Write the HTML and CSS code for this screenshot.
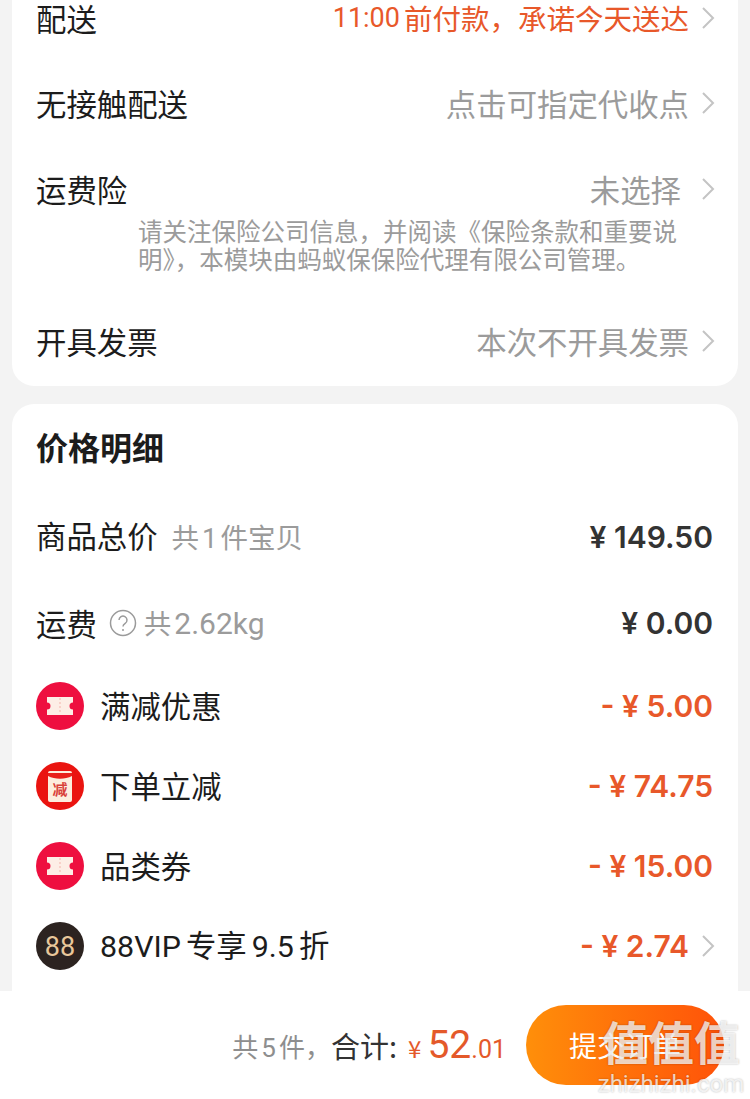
FILE: index.html
```html
<!DOCTYPE html>
<html lang="zh-CN">
<head>
    <meta charset="UTF-8">
    <title>确认订单</title>
    <link rel="stylesheet" href="styles.css">
</head>
<body>
    <main class="content">
        <section class="card card-top">
            <div class="row row-first">
                <span>配送</span>
                <span class="value orange value-time"><span class="num time">11:00</span>前付款，承诺今天送达<svg class="arrow" viewBox="0 0 14 24"><path d="M2 2l10 10L2 22"/></svg></span>
            </div>
            <div class="row">
                <span>无接触配送</span>
                <span class="value">点击可指定代收点<svg class="arrow" viewBox="0 0 14 24"><path d="M2 2l10 10L2 22"/></svg></span>
            </div>
            <div class="insure">
                <div class="insure-head">
                    <span>运费险</span>
                    <span class="value value-short">未选择<svg class="arrow" viewBox="0 0 14 24"><path d="M2 2l10 10L2 22"/></svg></span>
                </div>
                <p class="note">请关注保险公司信息，并阅读《保险条款和重要说明》，本模块由蚂蚁保保险代理有限公司管理。</p>
            </div>
            <div class="row">
                <span>开具发票</span>
                <span class="value">本次不开具发票<svg class="arrow" viewBox="0 0 14 24"><path d="M2 2l10 10L2 22"/></svg></span>
            </div>
        </section>

        <section class="card card-price">
            <h2 class="title">价格明细</h2>
            <div class="row">
                <span>商品总价<span class="sub sub-goods">共<span class="num gap">1</span>件宝贝</span></span>
                <span class="price">¥ 149.50</span>
            </div>
            <div class="row row-fee">
                <span class="fee">运费
                    <svg class="help" viewBox="0 0 28 28"><circle cx="14" cy="14" r="12.5"/><path d="M10 11a4 4 0 1 1 6.2 3.4c-1.4.9-2.2 1.6-2.2 3.1"/><circle class="dot" cx="14" cy="21" r="1"/></svg>
                    <span class="sub">共<span class="num gap weight">2.62kg</span></span>
                </span>
                <span class="price">¥ 0.00</span>
            </div>
            <div class="row row-promo">
                <span class="promo">
                    <svg class="badge" viewBox="0 0 48 48"><circle cx="24" cy="24" r="24" fill="#ee0f3f"/><path fill="#fdeee6" d="M11 15h26v5.500a3.500 3.500 0 0 0 0 7V33H11v-5.500a3.500 3.500 0 0 0 0-7z"/><path stroke="#f6c7c0" stroke-width="1.500" stroke-dasharray="2 2" d="M24 16v16"/></svg>
                    满减优惠
                </span>
                <span class="price orange">- ¥ 5.00</span>
            </div>
            <div class="row row-promo">
                <span class="promo">
                    <svg class="badge" viewBox="0 0 48 48"><circle cx="24" cy="24" r="24" fill="#ea1410"/><rect x="12" y="9" width="24" height="31" rx="2" fill="#fdeede"/><path d="M12 11h24v3c-7 3.500-17 3.500-24 0z" fill="#e9201a"/><text x="24" y="33" class="badge-text">减</text></svg>
                    下单立减
                </span>
                <span class="price orange">- ¥ 74.75</span>
            </div>
            <div class="row row-promo">
                <span class="promo">
                    <svg class="badge" viewBox="0 0 48 48"><circle cx="24" cy="24" r="24" fill="#ee0f3f"/><path fill="#fdeee6" d="M11 15h26v5.500a3.500 3.500 0 0 0 0 7V33H11v-5.500a3.500 3.500 0 0 0 0-7z"/><path stroke="#f6c7c0" stroke-width="1.500" stroke-dasharray="2 2" d="M24 16v16"/></svg>
                    品类券
                </span>
                <span class="price orange">- ¥ 15.00</span>
            </div>
            <div class="row row-promo">
                <span class="promo">
                    <svg class="badge" viewBox="0 0 48 48"><circle cx="24" cy="24" r="24" fill="#2c2320"/><text x="24" y="34" class="badge-vip">88</text></svg>
                    <span><span class="num">88VIP</span><span class="gap-l">专享</span><span class="num gap-w">9.5</span>折</span>
                </span>
                <span class="price orange">- ¥ 2.74<svg class="arrow" viewBox="0 0 14 24"><path d="M2 2l10 10L2 22"/></svg></span>
            </div>
        </section>
    </main>

    <footer class="bar">
        <span class="count">共<span class="num gap">5</span>件，</span>
        <span class="total-label">合计:</span>
        <span class="total"><span class="yen">¥</span> <span class="big">52</span><span class="cents">.01</span></span>
        <button class="submit" type="button">提交订单</button>
    </footer>

    <div class="watermark">
        <div class="wm-main">值值值</div>
        <div class="wm-url">zhizhizhi.com</div>
    </div>
</body>
</html>
```

FILE: styles.css
```css
* {
    box-sizing: border-box;
}
html, body {
    margin: 0;
    height: 1099px;
    overflow: hidden;
}
body {
    position: relative;
    display: flex;
    flex-direction: column;
    background: #f3f3f3;
    color: #1c1c1c;
    font-family: "Noto Sans CJK SC", "Noto Sans", sans-serif;
    font-size: 30.400px;
}
.num {
    font-family: "Roboto", "Noto Sans", sans-serif;
}
.gap {
    margin: 0 3px;
}
.gap-l {
    margin-left: 5px;
}
.gap-w {
    margin: 0 5px;
}
.content {
    flex: 1;
    overflow: hidden;
    padding: 0 12px;
}
.card {
    background: #fff;
    border-radius: 22px;
    padding: 0 25px 0 24px;
}
.card-top {
    margin-top: -24px;
    margin-bottom: 18px;
}
.card-price {
    min-height: 620px;
}
.row, .insure-head {
    display: flex;
    justify-content: space-between;
    align-items: center;
    height: 86px;
    line-height: 34px;
}
.card-top .row {
    padding-bottom: 4px;
}
.card-top .row-first {
    padding-bottom: 2px;
}
.value {
    display: flex;
    align-items: center;
    color: #9b9b9b;
}
.orange {
    color: #e8582a;
}
.value-time {
    font-size: 28.500px;
}
.time {
    margin-right: 4px;
    font-size: 27px;
}
.arrow {
    width: 14px;
    height: 24px;
    margin: 0 -2px 0 12px;
    fill: none;
    stroke: #c4c4c4;
    stroke-width: 2;
}
.insure {
    height: 152px;
    padding-top: 24px;
}
.insure-head {
    height: 34px;
}
.value-short .arrow {
    margin-left: 20px;
}
.note {
    margin: 11px 0 0 102px;
    width: 550px;
    color: #9b9b9b;
    font-size: 24.500px;
    line-height: 28px;
}
.title {
    margin: 0;
    padding-top: 23px;
    height: 90px;
    font-size: 32px;
    font-weight: 700;
    line-height: 38px;
}
.sub {
    color: #9b9b9b;
    font-size: 27.500px;
}
.sub-goods {
    margin-left: 14px;
}
.weight {
    font-size: 30px;
}
.fee {
    display: flex;
    align-items: center;
    gap: 7px;
}
.help {
    width: 28px;
    height: 28px;
    margin: 0 0 0 5px;
    fill: none;
    stroke: #9b9b9b;
    stroke-width: 1.500;
}
.help .dot {
    fill: #9b9b9b;
    stroke: none;
}
.price {
    display: flex;
    align-items: center;
    color: #333;
    font-family: "Inter", "Noto Sans", sans-serif;
    font-size: 30px;
    font-weight: 600;
}
.price.orange {
    color: #e8582a;
}
.row-promo {
    height: 80px;
}
.promo {
    display: flex;
    align-items: center;
    gap: 16px;
    padding-bottom: 2px;
    line-height: 32px;
}
.badge {
    width: 48px;
    height: 48px;
    margin-top: 2px;
    flex: none;
}
.badge-text {
    fill: #d9423a;
    font-size: 15px;
    font-weight: 700;
    text-anchor: middle;
}
.badge-vip {
    fill: #e8c79a;
    font-family: "Roboto", sans-serif;
    font-size: 27px;
    text-anchor: middle;
}
.bar {
    position: relative;
    flex: none;
    display: flex;
    align-items: center;
    justify-content: flex-end;
    height: 108px;
    padding: 0 26px 0 0;
    background: #fff;
    font-size: 26px;
}
.count {
    color: #8e8e8e;
}
.total-label {
    color: #333;
    font-size: 29px;
}
.total {
    margin-left: 11px;
    color: #e4592a;
    font-size: 27px;
    white-space: nowrap;
}
.yen {
    font-size: 24px;
}
.big {
    font-family: "Roboto", sans-serif;
    font-size: 39px;
}
.cents {
    font-family: "Roboto", sans-serif;
    font-size: 25px;
}
.submit {
    width: 198px;
    height: 80px;
    margin-left: 20px;
    border: none;
    border-radius: 40px;
    background: linear-gradient(90deg, #ff8f0a, #ff5209);
    color: #fff;
    font-family: inherit;
    font-size: 28px;
}
.watermark {
    position: absolute;
    left: 596px;
    top: 1017px;
    width: 150px;
    color: rgba(255, 255, 255, 0.75);
    text-align: center;
    line-height: 1;
    text-shadow: 0 0 2px rgba(0, 0, 0, 0.3);
}
.wm-main {
    font-size: 46px;
    font-weight: 700;
    white-space: nowrap;
}
.wm-url {
    margin-top: 9px;
    font-family: "Roboto", sans-serif;
    font-size: 24px;
}
```
